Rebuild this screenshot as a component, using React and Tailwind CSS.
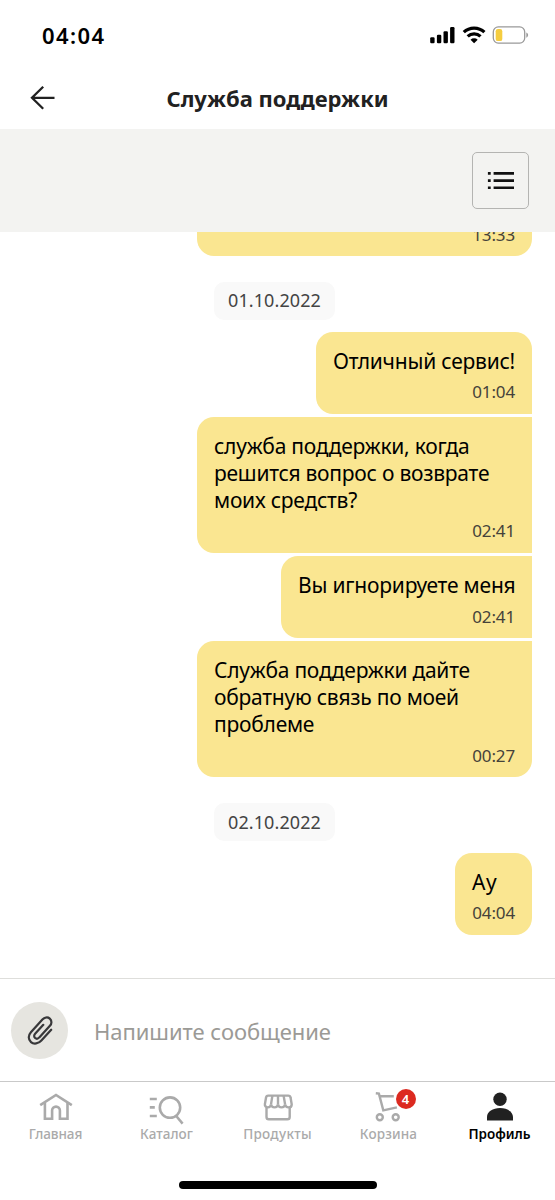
const NAV_ITEMS = [
  { id: 'home', label: 'Главная', icon: HomeIcon, text: 'tracking-[-0.1px]' },
  { id: 'catalog', label: 'Каталог', icon: CatalogIcon, text: 'tracking-[0.05px]' },
  { id: 'products', label: 'Продукты', icon: ProductsIcon, text: 'tracking-[0.3px]' },
  { id: 'cart', label: 'Корзина', icon: CartIcon, text: 'tracking-[0.15px]', badge: 4 },
  { id: 'profile', label: 'Профиль', icon: ProfileIcon, text: 'tracking-[0px]', active: true },
];

const CHAT = [
  {
    date: '01.10.2022',
    messages: [
      {
        lines: ['Отличный сервис!'],
        time: '01:04',
        text: 'tracking-[-0.22px]',
        size: 'w-[216px] rounded-[17px] rounded-br-none',
      },
      {
        lines: ['служба поддержки, когда', 'решится вопрос о возврате', 'моих средств?'],
        time: '02:41',
        text: 'tracking-[-0.24px]',
        size: 'w-[335px] rounded-l-[17px]',
      },
      {
        lines: ['Вы игнорируете меня'],
        time: '02:41',
        text: 'tracking-[-0.2px]',
        size: 'w-[251px] rounded-l-[17px]',
      },
      {
        lines: ['Служба поддержки дайте', 'обратную связь по моей', 'проблеме'],
        time: '00:27',
        text: 'tracking-[-0.24px]',
        size: 'w-[335px] rounded-[17px] rounded-tr-none',
      },
    ],
  },
  {
    date: '02.10.2022',
    messages: [{ lines: ['Ау'], time: '04:04', text: 'tracking-[1px]', size: 'w-[77px] rounded-[17px]' }],
  },
];

function HomeIcon() {
  return (
    <svg className="w-9 h-8" viewBox="0 0 36 32" fill="none" stroke="currentColor" strokeWidth="2.6">
      <path d="M2.2 15.2 18 5l15.8 10.2" />
      <path d="M6.9 13v15.8h7.2v-8.3a3.9 3.9 0 0 1 7.8 0v8.3h7.6V13" />
    </svg>
  );
}

function CatalogIcon() {
  return (
    <svg className="w-9 h-8 overflow-visible" viewBox="0 0 36 32" fill="none" stroke="currentColor" strokeWidth="2.6">
      <path d="M.8 9h7M.8 17.4h5M.8 26h7" />
      <circle cx="21" cy="17.6" r="10.2" />
      <path d="m27.2 26 6.4 7.6" />
    </svg>
  );
}

function ProductsIcon() {
  return (
    <svg className="w-9 h-8" viewBox="0 0 36 32" fill="none" stroke="currentColor" strokeWidth="2.4">
      <path d="M8.2 5.6h20c1.5 0 2.2.8 2.4 2.2l1.1 6.6c0 1.8-1.4 3-3.1 3-1.9 0-3.2-1.2-3.5-3-.3 1.8-1.7 3-3.6 3s-3.2-1.2-3.5-3c-.3 1.8-1.6 3-3.5 3s-3.2-1.2-3.5-3c-.3 1.8-1.6 3-3.1 3-2 0-3.3-1.5-3-3.3l1.1-6.3c.2-1.4.8-2.2 2.2-2.2Z" />
      <path d="m12.4 5.6-1.4 8.8M18 5.6v8.8M23.6 5.6l1.5 8.8" />
      <path d="M6.5 17.5v9.4c0 1.5.8 2.3 2.3 2.3h18.6c1.5 0 2.3-.8 2.3-2.3v-9.4" />
    </svg>
  );
}

function CartIcon() {
  return (
    <svg className="w-9 h-8" viewBox="0 0 36 32" fill="none" stroke="currentColor" strokeWidth="2.4">
      <path d="m4.8 3.3 3.1.3 4.4 16.8 13.6-3M8.4 6.2h14.4" />
      <circle cx="8.8" cy="27.2" r="3" />
      <circle cx="24.7" cy="27.2" r="3" />
    </svg>
  );
}

function ProfileIcon() {
  return (
    <svg className="w-9 h-8" viewBox="0 0 36 32" fill="#212121">
      <circle cx="18" cy="9.2" r="6.7" />
      <path d="M5 30.4v-3.3c0-5.4 5.9-9 13-9s13 3.6 13 9v3.3Z" />
    </svg>
  );
}

function StatusBar() {
  return (
    <div className="flex h-[68px] items-start justify-between pl-[42px] pr-[26px] pt-[21px]">
      <span className="text-[22px] leading-[28px] font-semibold tracking-[1.4px] text-black">04:04</span>
      <div className="flex items-center pt-[4px]">
        <svg className="w-[26px] h-[20px]" viewBox="0 0 26 20">
          <rect x="0.2" y="12.2" width="4.4" height="6" rx="1.2" />
          <rect x="6.9" y="9.8" width="4.4" height="8.4" rx="1.2" />
          <rect x="13.5" y="6.2" width="4.4" height="12" rx="1.2" />
          <rect x="20.1" y="2" width="4.4" height="16.2" rx="1.2" />
        </svg>
        <svg className="ml-[6px] w-[25px] h-[20px]" viewBox="0 0 25 20" fill="none" stroke="#000" strokeWidth="3.2">
          <path d="M1.8 7.2a14.8 14.8 0 0 1 20.6 0" />
          <path d="M5.7 11.4a9.2 9.2 0 0 1 12.8 0" />
          <path d="m12.1 18.3-3.6-3.6a5.2 5.2 0 0 1 7.2 0Z" fill="#000" stroke="none" />
        </svg>
        <svg className="ml-[5px] w-[37px] h-[20px]" viewBox="0 0 37 20" fill="none">
          <rect x="1.3" y="1.9" width="31.4" height="16.2" rx="5" stroke="#999" strokeWidth="1.3" />
          <rect x="3.7" y="4.1" width="6.6" height="12" rx="2.2" fill="#f5cd40" />
          <path d="M34.3 7.5c1.1.4 1.8 1.4 1.8 2.6s-.7 2.2-1.8 2.6Z" fill="#999" />
        </svg>
      </div>
    </div>
  );
}

function Message({ message }) {
  return (
    <div className={`flex h-max flex-col bg-[#fae691] px-[17px] pt-[16px] pb-[9px] ${message.size}`}>
      {message.lines.map((line) => (
        <p key={line} className={`text-[21px] leading-[27px] whitespace-nowrap text-black ${message.text}`}>
          {line}
        </p>
      ))}
      <span className="mt-[5.5px] mb-[0.5px] self-end text-[17px] leading-[24px] tracking-[-0.15px] text-[#45423a]">
        {message.time}
      </span>
    </div>
  );
}

export default function App() {
  return (
    <div className="flex h-[1200px] w-[555px] flex-col overflow-hidden bg-white font-['Noto_Sans','Open_Sans',sans-serif]">
      <StatusBar />

      {/* Header */}
      <header className="grid h-[61px] shrink-0 grid-cols-[83px_1fr_83px] items-center pb-[2px]">
        <button className="pl-[29px]" aria-label="Назад">
          <svg className="w-[27px] h-[26px]" viewBox="0 0 27 26" fill="none" stroke="#212121" strokeWidth="2.3">
            <path d="M25.5 12.8H2.5M14.2 1.8 3 12.8l11.2 11" />
          </svg>
        </button>
        <h1 className="text-center text-[22px] leading-[28px] font-bold whitespace-nowrap text-[#212121]">
          Служба поддержки
        </h1>
      </header>

      <div className="flex h-[103px] shrink-0 items-center justify-end bg-[#f3f3f1] pr-[26px]">
        <button className="flex h-[57px] w-[57px] items-center justify-center rounded-[5px] border border-[#b4b4b2]" aria-label="Меню">
          <svg className="w-[27px] h-[19px]" viewBox="0 0 27 19" fill="#111">
            <path d="M.9 1h2.8v2.7H.9zM.9 8.2h2.8v2.7H.9zM.9 15.4h2.8v2.7H.9zM6.6 1H27v2.7H6.6zM6.6 8.2H27v2.7H6.6zM6.6 15.4H27v2.7H6.6z" />
          </svg>
        </button>
      </div>

      {/* Message history */}
      <main className="flex h-[746px] shrink-0 flex-col items-end overflow-hidden pr-[23px]">
        <div className="flex h-[24px] w-[335px] shrink-0 items-end justify-end rounded-b-[17px] bg-[#fae691] pr-[17px] pb-[9px]">
          <span className="text-[17px] leading-[24px] tracking-[-0.15px] text-[#45423a]">13:33</span>
        </div>
        {CHAT.map((group) => (
          <section key={group.date} className="flex w-full flex-col items-end pt-[25.5px]">
            <div className="mr-[197px] flex h-[38.5px] w-[121px] items-center justify-center rounded-[10px] bg-[#f9f9f9] text-[18px] tracking-[0.1px] text-[#444]">
              {group.date}
            </div>
            <div className="mt-[11.5px] flex flex-col items-end gap-[3.3px]">
              {group.messages.map((message) => (
                <Message key={message.lines[0]} message={message} />
              ))}
            </div>
          </section>
        ))}
      </main>

      {/* Composer */}
      <div className="flex h-[103px] shrink-0 items-center border-t-[1.5px] border-[#dededb] pl-[11px]">
        <button className="flex h-[57px] w-[57px] items-center justify-center rounded-full bg-[#e6e5e0]" aria-label="Прикрепить">
          <svg className="w-[28px] h-[30px]" viewBox="0 0 28 30" fill="none" stroke="#38383a" strokeWidth="2.2" strokeLinecap="round">
            <path d="m25.2 14.7-9.8 10.8c-2.9 3.2-7.5 4.1-10.4 1.6-3-2.6-2.9-6.8-.1-9.9L16.4 4.6c2.1-2.3 5.2-2.9 7.4-1 2.2 2 2.1 5 .1 7.2L13.3 22.4c-1.2 1.4-3 1.6-4.2.6-1.3-1.1-1.2-2.9 0-4.2l8.2-9" />
          </svg>
        </button>
        <span className="ml-[26px] pt-px text-[22px] leading-[28px] tracking-[-0.05px] text-[#9b9a96]">Напишите сообщение</span>
      </div>

      {/* Bottom navigation */}
      <nav className="flex h-[119px] shrink-0 flex-col border-t border-[#c9c9c9]">
        <div className="grid grid-cols-5 pt-[8px]">
          {NAV_ITEMS.map((item) => (
            <div
              key={item.id}
              className={`relative flex flex-col items-center ${item.active ? 'font-semibold text-black' : 'font-medium text-[#aaa]'}`}
            >
              <item.icon />
              {item.badge && (
                <span className="absolute left-[62.5px] -top-px flex h-[20px] w-[20px] items-center justify-center rounded-full bg-[#dc2a20] text-[13px] leading-none font-semibold text-white">
                  {item.badge}
                </span>
              )}
              <span className={`mt-[2px] text-[13.5px] leading-[20px] ${item.text}`}>{item.label}</span>
            </div>
          ))}
        </div>
        <div className="mx-auto mt-[37px] h-[7.5px] w-[198px] rounded-full bg-black" />
      </nav>
    </div>
  );
}
